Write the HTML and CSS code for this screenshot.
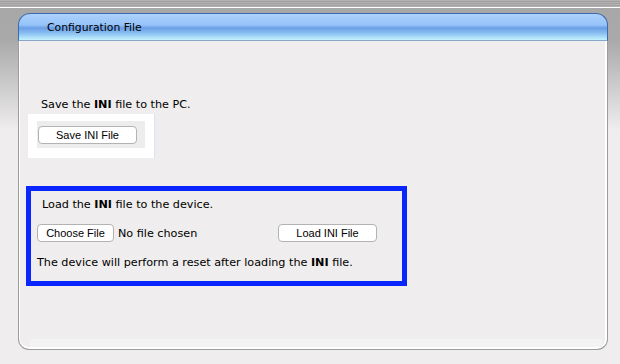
FILE: index.html
```html
<!DOCTYPE html>
<html lang="en">
<head>
    <meta charset="UTF-8">
    <title>Configuration File</title>
    <link rel="stylesheet" href="styles.css">
</head>
<body>
    <div class="topbar"></div>

    <div class="panel">
        <div class="panel-head">Configuration File</div>

        <div class="panel-body">
            <p class="line save-line">Save the <b>INI</b> file to the PC.</p>

            <div class="save-box">
                <div class="save-inner">
                    <button class="btn save-btn">Save INI File</button>
                </div>
            </div>

            <div class="load-box">
                <p class="line">Load the <b>INI</b> file to the device.</p>
                <div class="load-row">
                    <button class="btn choose-btn">Choose File</button>
                    <span class="no-file">No file chosen</span>
                    <button class="btn load-btn">Load INI File</button>
                </div>
                <p class="line note">The device will perform a reset after loading the <b>INI</b> file.</p>
            </div>

            <div class="panel-foot"></div>
        </div>
    </div>
</body>
</html>
```

FILE: styles.css
```css
body {
    margin: 0;
    padding: 0;
    font-family: "DejaVu Sans", Verdana, sans-serif;
    font-size: 11.2px;
    color: #000;
    background: linear-gradient(#a7a7a7 0px, #a9a9a9 40px, #efeded 130px, #efeded 100%);
    height: 364px;
    overflow: hidden;
}

.topbar {
    height: 7px;
    background: repeating-linear-gradient(#b4b2b2 0px, #b4b2b2 1px, #a29f9f 1px, #a29f9f 2px);
    border-bottom: 1px solid #fff;
}

.panel {
    width: 590px;
    margin: 5px 0 0 18px;
}

.panel-head {
    height: 26px;
    line-height: 27px;
    padding-left: 28px;
    font-size: 10.8px;
    border: 1px solid #3d69ad;
    border-bottom: 1px solid #8aa6c8;
    border-radius: 12px 12px 0 0;
    background: linear-gradient(#acd2fc 0%, #96c3f9 42%, #6b9ee6 54%, #86bcf0 72%, #c6f3ff 100%);
}

.panel-body {
    height: 307px;
    padding-top: 1px;
    border: 1px solid #9c9c9c;
    border-top: none;
    border-radius: 0 0 11px 11px;
    box-shadow: inset 1px 0 0 #fff, inset -2px 0 0 #fff, inset 0 -2px 0 #fff;
    background: #efeded;
}

.line {
    margin: 0;
    line-height: 14px;
}

.save-line {
    margin: 56px 0 0 22px;
}

.save-box {
    width: 127px;
    height: 44px;
    margin: 2px 0 0 9px;
    background: #fff;
    border-right: 1px solid #dde2f3;
    box-sizing: border-box;
    display: flex;
    padding: 7px 0 0 9px;
}

.save-inner {
    width: 108px;
    height: 27px;
    background: #eeeded;
    padding: 5px 0 0 1px;
    box-sizing: border-box;
}

.btn {
    font-family: "Liberation Sans", Arial, sans-serif;
    font-size: 11px;
    height: 18px;
    padding: 0;
    background: #fff;
    border: 1px solid #b3b3b3;
    border-radius: 4px;
    color: #000;
}

.save-btn,
.load-btn {
    width: 99px;
}

.choose-btn {
    width: 77px;
}

.load-box {
    width: 381px;
    height: 100px;
    margin: 28px 0 0 7px;
    border: 5px solid #0a26ff;
    box-sizing: border-box;
    padding: 7px 0 0 11px;
}

.load-row {
    display: flex;
    align-items: center;
    margin: 12px 0 0 -5px;
}

.no-file {
    margin-left: 4px;
    width: 160px;
}

.note {
    margin: 14px 0 0 -5px;
}

.panel-foot {
    height: 8px;
    margin: 53px 5px 0 11px;
    background: #f3f3f3;
}
```
